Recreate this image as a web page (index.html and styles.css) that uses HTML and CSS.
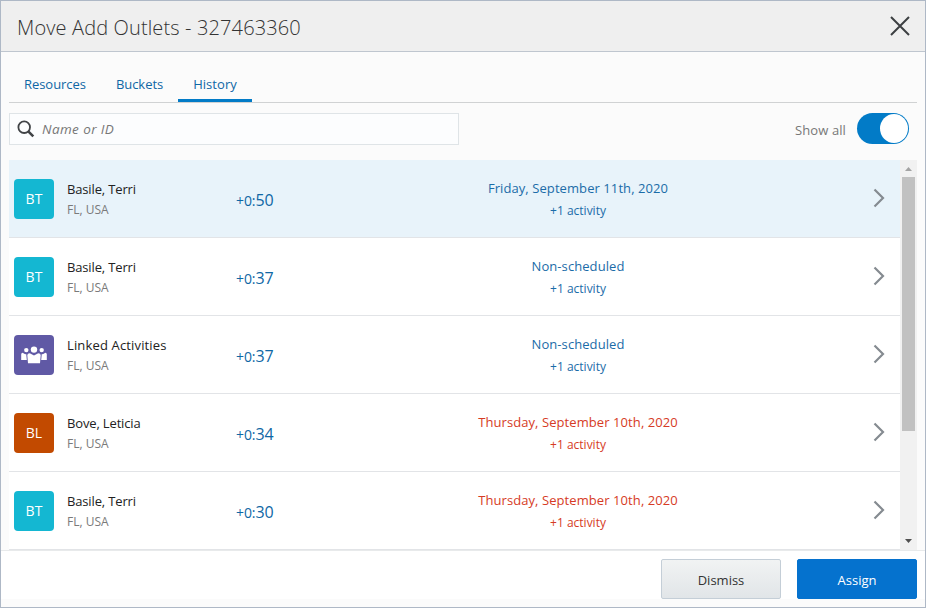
FILE: index.html
```html
<!DOCTYPE html>
<html lang="en">
<head>
    <meta charset="UTF-8">
    <meta name="viewport" content="width=device-width, initial-scale=1.0">
    <title>Move Add Outlets - 327463360</title>
    <link rel="stylesheet" href="styles.css">
</head>
<body>
    <div class="dialog">
        <div class="header">
            <h1>Move Add Outlets - 327463360</h1>
            <svg class="close" viewBox="0 0 20 20"><path d="M1 1L19 19M19 1L1 19"/></svg>
        </div>

        <div class="content">
            <div class="tabs">
                <div class="tab">Resources</div>
                <div class="tab">Buckets</div>
                <div class="tab active">History</div>
            </div>

            <div class="toolbar">
                <div class="search">
                    <svg class="search-icon" viewBox="0 0 18 18"><circle cx="7.2" cy="7.2" r="5.8"/><path d="M11.3 11.3L16.3 16.3"/></svg>
                    <span>Name or ID</span>
                </div>
                <div class="show-all">
                    <span>Show all</span>
                    <div class="toggle"><div class="knob"></div></div>
                </div>
            </div>

            <div class="list-wrap">
                <div class="list">
                    <div class="row selected">
                        <div class="avatar teal">BT</div>
                        <div class="person"><div class="name">Basile, Terri</div><div class="place">FL, USA</div></div>
                        <div class="time"><span class="hours">+0:</span>50</div>
                        <div class="date"><div class="day">Friday, September 11th, 2020</div><div class="count">+1 activity</div></div>
                        <svg class="arrow" viewBox="0 0 12 20"><path d="M1.5 1.5L10 10L1.5 18.5"/></svg>
                    </div>
                    <div class="row">
                        <div class="avatar teal">BT</div>
                        <div class="person"><div class="name">Basile, Terri</div><div class="place">FL, USA</div></div>
                        <div class="time"><span class="hours">+0:</span>37</div>
                        <div class="date"><div class="day">Non-scheduled</div><div class="count">+1 activity</div></div>
                        <svg class="arrow" viewBox="0 0 12 20"><path d="M1.5 1.5L10 10L1.5 18.5"/></svg>
                    </div>
                    <div class="row">
                        <div class="avatar purple">
                            <svg class="people" viewBox="0 0 26 18">
                                <circle cx="13" cy="3.6" r="3.2"/>
                                <circle cx="5.3" cy="4.1" r="2.2"/>
                                <circle cx="20.7" cy="4.1" r="2.2"/>
                                <path d="M7 17.3L6.3 9.2Q6.3 7.4 8.8 7.2L13 9.6L17.2 7.2Q19.7 7.4 19.7 9.2L19 17.3Z"/>
                                <path d="M0.2 14V8.3Q0.2 7 1.6 6.8L4.2 8.3L5.2 8L5.8 14Z"/>
                                <path d="M25.8 14V8.3Q25.8 7 24.4 6.8L21.8 8.3L20.8 8L20.2 14Z"/>
                            </svg>
                        </div>
                        <div class="person"><div class="name wide">Linked Activities</div><div class="place">FL, USA</div></div>
                        <div class="time"><span class="hours">+0:</span>37</div>
                        <div class="date"><div class="day">Non-scheduled</div><div class="count">+1 activity</div></div>
                        <svg class="arrow" viewBox="0 0 12 20"><path d="M1.5 1.5L10 10L1.5 18.5"/></svg>
                    </div>
                    <div class="row">
                        <div class="avatar orange">BL</div>
                        <div class="person"><div class="name">Bove, Leticia</div><div class="place">FL, USA</div></div>
                        <div class="time"><span class="hours">+0:</span>34</div>
                        <div class="date past"><div class="day">Thursday, September 10th, 2020</div><div class="count">+1 activity</div></div>
                        <svg class="arrow" viewBox="0 0 12 20"><path d="M1.5 1.5L10 10L1.5 18.5"/></svg>
                    </div>
                    <div class="row">
                        <div class="avatar teal">BT</div>
                        <div class="person"><div class="name">Basile, Terri</div><div class="place">FL, USA</div></div>
                        <div class="time"><span class="hours">+0:</span>30</div>
                        <div class="date past"><div class="day">Thursday, September 10th, 2020</div><div class="count">+1 activity</div></div>
                        <svg class="arrow" viewBox="0 0 12 20"><path d="M1.5 1.5L10 10L1.5 18.5"/></svg>
                    </div>
                </div>
                <div class="scrollbar">
                    <svg class="scroll-up" viewBox="0 0 17 17"><path d="M5 11L8.5 7L12 11Z"/></svg>
                    <div class="thumb"></div>
                    <svg class="scroll-down" viewBox="0 0 17 17"><path d="M5 6L8.5 10L12 6Z"/></svg>
                </div>
            </div>
        </div>

        <div class="footer">
            <button class="btn">Dismiss</button>
            <button class="btn primary">Assign</button>
        </div>
    </div>
</body>
</html>
```

FILE: styles.css
```css
* {
    box-sizing: border-box;
}
body {
    margin: 0;
    font-family: 'Open Sans', 'Noto Sans', sans-serif;
    font-size: 13px;
    color: #222;
}
.dialog {
    width: 926px;
    height: 608px;
    display: flex;
    flex-direction: column;
    background-color: #fbfbfb;
    border: 1px solid #aeb8c6;
    overflow: hidden;
}
.header {
    height: 51px;
    flex: none;
    display: flex;
    align-items: center;
    justify-content: space-between;
    padding: 0 15px 0 16px;
    background-color: #efefef;
    border-bottom: 1px solid #bfc6cf;
}
.header h1 {
    margin: 3px 0 0;
    font-size: 20px;
    font-weight: 300;
    line-height: 26px;
    letter-spacing: 0.13px;
    color: #333;
}
.close {
    width: 20px;
    height: 20px;
    fill: none;
    stroke: #3c3f42;
    stroke-width: 2;
}
.content {
    flex: none;
    height: 498px;
    padding: 0 8px;
}
.tabs {
    display: flex;
    height: 51px;
    border-bottom: 1px solid #d0d2d3;
}
.tab {
    height: 50px;
    padding: 22px 15px 0;
    line-height: 20px;
    letter-spacing: -0.05px;
    color: #0f67a5;
}
.active {
    width: 74px;
    padding-right: 0;
    border-bottom: 3px solid #027bc7;
    letter-spacing: 0.05px;
}
.toolbar {
    height: 57px;
    display: flex;
    justify-content: space-between;
    padding: 10px 8px 0 0;
}
.search {
    width: 450px;
    height: 32px;
    display: flex;
    align-items: center;
    padding-left: 7px;
    border: 1px solid #dfe4e7;
    background-color: #fcfdfe;
    font-style: italic;
    font-size: 13.5px;
    letter-spacing: 0.4px;
    color: #777;
}
.search-icon {
    width: 18px;
    height: 18px;
    margin-right: 7px;
    fill: none;
    stroke: #404346;
    stroke-width: 1.8;
}
.search-icon path {
    stroke-width: 2.6;
}
.show-all {
    display: flex;
    height: 32px;
    color: #777;
    line-height: 34px;
    letter-spacing: 0.1px;
}
.toggle {
    width: 52px;
    height: 31px;
    margin-left: 11px;
    padding: 1px;
    border-radius: 16px;
    background-color: #027bc7;
}
.knob {
    width: 28px;
    height: 29px;
    margin-left: 22px;
    border-radius: 50%;
    background-color: #fff;
}
.list-wrap {
    display: flex;
    height: 390px;
}
.list {
    width: 891px;
    background-color: #fff;
}
.row {
    height: 78px;
    display: flex;
    padding-left: 5px;
    border-bottom: 1px solid #e2e4e7;
}
.selected {
    background-color: #e8f3fa;
}
.avatar {
    width: 40px;
    height: 40px;
    margin-top: 19px;
    display: flex;
    align-items: center;
    justify-content: center;
    padding-bottom: 1px;
    border-radius: 4px;
    color: #fff;
    font-size: 14px;
    font-weight: 500;
}
.teal {
    background-color: #14b7d2;
}
.purple {
    background-color: #6059a5;
}
.orange {
    background-color: #c24a00;
}
.people {
    width: 26px;
    height: 18px;
    fill: #fff;
}
.person {
    width: 169px;
    margin-left: 13px;
    padding-top: 19px;
}
.name {
    line-height: 20px;
    letter-spacing: -0.15px;
    color: #222;
}
.wide {
    letter-spacing: 0.15px;
}
.place {
    font-size: 12px;
    line-height: 21px;
    color: #7a7a7a;
}
.time {
    width: 100px;
    padding-top: 28px;
    font-size: 16px;
    line-height: 24px;
    letter-spacing: -0.1px;
    color: #0f67a5;
}
.hours {
    font-size: 14px;
}
.date {
    width: 484px;
    padding-top: 18px;
    text-align: center;
    color: #1b6ca8;
}
.day {
    line-height: 20px;
    letter-spacing: 0.08px;
}
.count {
    margin-top: 3px;
    font-size: 12px;
    line-height: 20px;
}
.past {
    color: #d63b25;
}
.arrow {
    width: 12px;
    height: 20px;
    margin: 28px 0 0 53px;
    fill: none;
    stroke: #858b91;
    stroke-width: 2.2;
}
.scrollbar {
    width: 17px;
    display: flex;
    flex-direction: column;
    background-color: #f1f1f1;
}
.scroll-up,
.scroll-down {
    width: 17px;
    height: 17px;
    fill: #a3a3a3;
}
.scroll-down {
    margin-top: auto;
    fill: #505050;
}
.thumb {
    width: 13px;
    height: 254px;
    margin-left: 2px;
    background-color: #c1c1c1;
}
.footer {
    height: 49px;
    display: flex;
    justify-content: flex-end;
    gap: 16px;
    padding: 8px 8px 0;
    border-top: 1px solid #e8eaeb;
    background-color: #fff;
}
.btn {
    width: 120px;
    height: 40px;
    padding: 2px 0 0;
    border: 1px solid #c4ced7;
    border-radius: 2px;
    background: linear-gradient(#f1f3f3, #e1e5e8);
    font-family: inherit;
    font-size: 13px;
    color: #333;
}
.primary {
    border-color: #0572ce;
    background: #0572ce;
    color: #fff;
}
```
